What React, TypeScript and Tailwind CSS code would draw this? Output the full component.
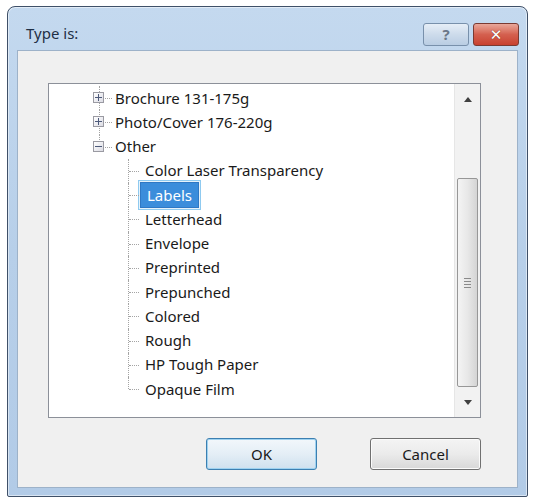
import React from 'react';

const font = { fontFamily: '"Noto Sans", "DejaVu Sans", sans-serif' };

type Child = { label: string; selected?: boolean };

const children: Child[] = [
  { label: 'Color Laser Transparency' },
  { label: 'Labels', selected: true },
  { label: 'Letterhead' },
  { label: 'Envelope' },
  { label: 'Preprinted' },
  { label: 'Prepunched' },
  { label: 'Colored' },
  { label: 'Rough' },
  { label: 'HP Tough Paper' },
  { label: 'Opaque Film' },
];

const ExpandBox: React.FC<{ open?: boolean }> = ({ open }) => (
  <div className="absolute left-[44px] top-[6px] w-[11px] h-[11px] border border-[#9a9aa2] bg-gradient-to-br from-white to-[#dcdce4] flex items-center justify-center">
    <div className="relative w-[7px] h-[7px]">
      <div className="absolute left-0 top-[3px] w-[7px] h-[1px] bg-[#4d5a7a]" />
      {!open && <div className="absolute left-[3px] top-0 w-[1px] h-[7px] bg-[#4d5a7a]" />}
    </div>
  </div>
);

const RootRow: React.FC<{ label: string; open?: boolean; last?: boolean }> = ({ label, open, last }) => (
  <div className="flex items-center h-[24.25px]">
    <div className="relative w-[66px] h-full shrink-0">
      <div className={`absolute left-[50px] top-0 border-l border-dotted border-[#a4a4a4] ${last ? 'h-[7px]' : 'h-full'}`} />
      <div className="absolute left-[56px] top-[12px] w-[7px] border-t border-dotted border-[#a4a4a4]" />
      <ExpandBox open={open} />
    </div>
    <span className="text-[15px] text-[#1a1a1a] leading-none whitespace-nowrap">{label}</span>
  </div>
);

const ChildRow: React.FC<{ item: Child; last?: boolean }> = ({ item, last }) => (
  <div className="flex items-center h-[24.25px]">
    <div className="relative w-[89px] h-full shrink-0">
      <div className={`absolute left-[79px] top-0 border-l border-dotted border-[#a4a4a4] ${last ? 'h-[12px]' : 'h-full'}`} />
      <div className="absolute left-[80px] top-[12px] w-[10px] border-t border-dotted border-[#a4a4a4]" />
    </div>
    {item.selected ? (
      <span className="border border-[#8fcaf0] p-[1px] bg-[#e6f3fb]">
        <span className="block bg-[#3b8ddb] border border-[#2f78c4] px-[6px] h-[26px] leading-[24px] text-[15px] text-white whitespace-nowrap">
          {item.label}
        </span>
      </span>
    ) : (
      <span className="px-[7px] text-[15px] text-[#1a1a1a] leading-none whitespace-nowrap">{item.label}</span>
    )}
  </div>
);

const ScrollBar: React.FC = () => (
  <div className="w-[26px] h-full bg-[#f2f2f2] border-l border-[#e6e6e6] flex flex-col items-center">
    <div className="h-[30px] w-full flex items-center justify-center">
      <div className="w-0 h-0 border-l-[4px] border-r-[4px] border-b-[5px] border-l-transparent border-r-transparent border-b-[#404040]" />
    </div>
    <div className="h-[64px]" />
    <div className="w-[21px] h-[209px] rounded-[2px] border border-[#979797] bg-gradient-to-r from-[#f4f4f4] via-[#e8e8e8] to-[#d4d4d4] flex flex-col items-center justify-center gap-[2px]">
      <div className="w-[7px] h-[1px] bg-[#8a8a8a]" />
      <div className="w-[7px] h-[1px] bg-[#8a8a8a]" />
      <div className="w-[7px] h-[1px] bg-[#8a8a8a]" />
      <div className="w-[7px] h-[1px] bg-[#8a8a8a]" />
    </div>
    <div className="flex-1 w-full flex items-center justify-center">
      <div className="w-0 h-0 border-l-[4px] border-r-[4px] border-t-[5px] border-l-transparent border-r-transparent border-t-[#404040]" />
    </div>
  </div>
);

export default function App() {
  return (
    <div className="w-[534px] h-[501px] bg-white pt-[6px] pl-[7px] pr-[6px] pb-[4px]" style={font}>
      <div className="w-full h-full rounded-t-[8px] rounded-b-[2px] border border-[#3f5068] bg-gradient-to-b from-[#c4d9ef] via-[#b7cfe9] to-[#b2cbe7] flex flex-col shadow-[inset_0_0_0_1px_rgba(255,255,255,0.5)]">
        <div className="h-[43px] flex items-start justify-between pl-[18px] pr-[8px] shrink-0">
          <span className="text-[15px] text-[#1f2f45] pt-[19px] leading-none">Type is:</span>
          <div className="flex items-center gap-[4px] pt-[16px]">
            <div className="w-[46px] h-[23px] rounded-[3px] border border-[#7890ab] bg-gradient-to-b from-[#e6eef7] via-[#cddbeb] to-[#b9cde3] flex items-center justify-center">
              <span className="text-[15px] font-bold text-[#6a7788] leading-none">?</span>
            </div>
            <div className="w-[46px] h-[23px] rounded-[3px] border border-[#7a3a32] bg-gradient-to-b from-[#e8a79a] via-[#d4604f] to-[#c8402f] flex items-center justify-center">
              <span className="text-[15px] font-bold text-white leading-none [text-shadow:0_0_1px_#5a1a10]">✕</span>
            </div>
          </div>
        </div>
        <div className="flex-1 mx-[9px] mb-[8px] bg-[#f0f0f0] border border-[#9db2c9] flex flex-col pl-[30px] pr-[36px] pt-[32px]">
          <div className="h-[335px] border border-[#8c9099] bg-white flex">
            <div className="flex-1 pt-[2px] overflow-hidden">
              <RootRow label="Brochure 131-175g" />
              <RootRow label="Photo/Cover 176-220g" />
              <RootRow label="Other" open last />
              {children.map((c, i) => (
                <ChildRow key={c.label} item={c} last={i === children.length - 1} />
              ))}
            </div>
            <ScrollBar />
          </div>
          <div className="flex justify-end gap-[53px] mt-[20px] pr-0">
            <button className="w-[111px] h-[32px] rounded-[3px] border border-[#3c7fb1] bg-gradient-to-b from-[#f2f7fb] via-[#e4eef6] to-[#cfe0ee] shadow-[inset_0_0_0_1px_#9fd2f0] text-[15px] text-[#1a1a1a]">
              OK
            </button>
            <button className="w-[111px] h-[32px] rounded-[3px] border border-[#707070] bg-gradient-to-b from-[#f4f4f4] via-[#ebebeb] to-[#d8d8d8] shadow-[inset_0_0_0_1px_#fbfbfb] text-[15px] text-[#1a1a1a]">
              Cancel
            </button>
          </div>
        </div>
      </div>
    </div>
  );
}
